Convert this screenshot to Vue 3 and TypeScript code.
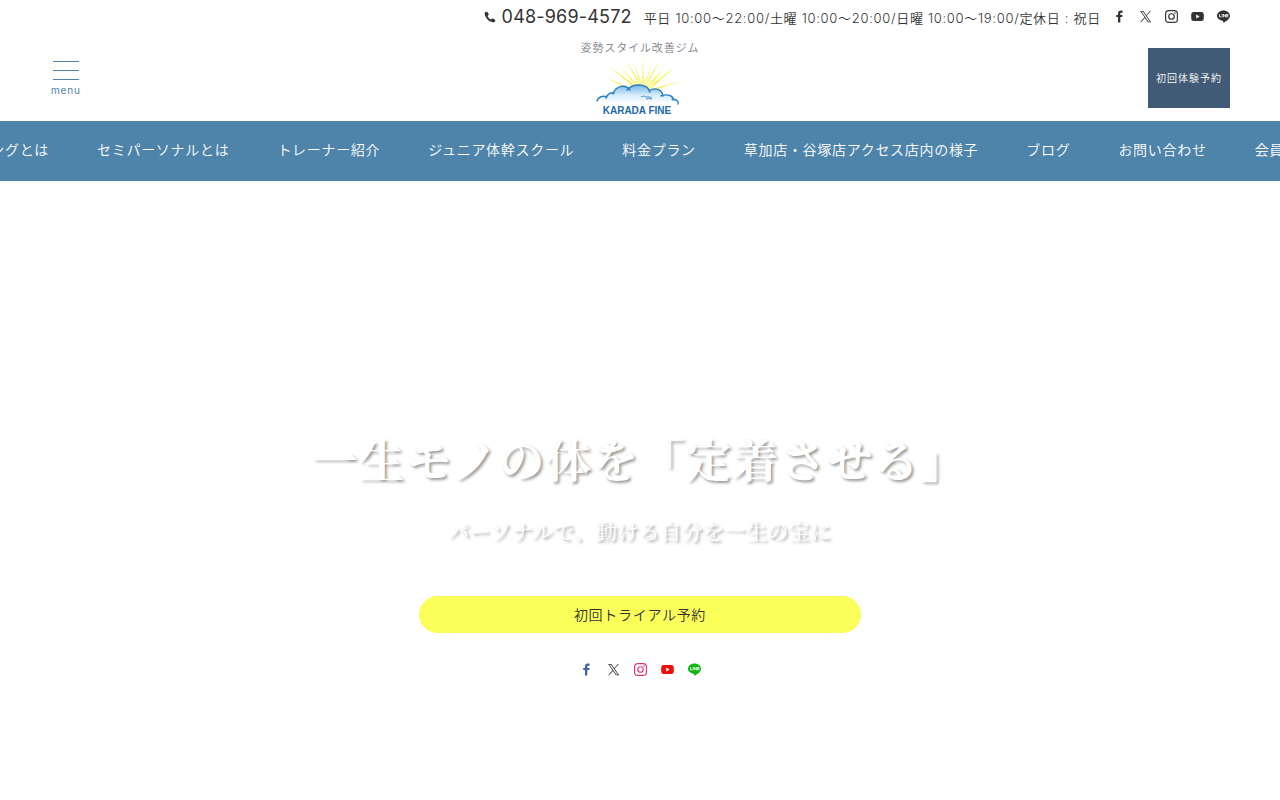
<script setup lang="ts">
interface Social {
  name: string
  path: string
}

const phone = '048-969-4572'
const hours = '平日 10:00〜22:00/土曜 10:00〜20:00/日曜 10:00〜19:00/定休日 : 祝日'

const navItems: string[] = [
  'パーソナルトレーニングとは',
  'セミパーソナルとは',
  'トレーナー紹介',
  'ジュニア体幹スクール',
  '料金プラン',
  '草加店・谷塚店アクセス店内の様子',
  'ブログ',
  'お問い合わせ',
  '会員様専用ご予約ページ',
]

const socials: Social[] = [
  {
    name: 'facebook',
    path: 'M9.2 23V13H6V9h3.2V6.6C9.200 3 11.100 1 14.600 1c1.400 0 2.700.1 3.100.2v3.700h-2.200c-1.600 0-2 .8-2 2V9h4.100l-.6 4h-3.500v10z',
  },
  {
    name: 'x',
    path: 'M14.2 10.600 21.800 2H20l-6.600 7.500L8.200 2H2.100l8 11.500L2.100 22.600h1.800l7-8 5.600 8h6.100zM11.700 13.400l-.8-1.200L4.600 3.300h2.700l5.200 7.400.8 1.200 6.800 9.500h-2.800z',
  },
  {
    name: 'instagram',
    path: 'M7 0h10a7 7 0 0 1 7 7v10a7 7 0 0 1-7 7H7a7 7 0 0 1-7-7V7a7 7 0 0 1 7-7zm0 2.200A4.800 4.800 0 0 0 2.200 7v10A4.800 4.800 0 0 0 7 21.800h10a4.800 4.800 0 0 0 4.800-4.800V7A4.800 4.800 0 0 0 17 2.200zM12 5.800a6.200 6.200 0 1 1 0 12.400 6.200 6.200 0 0 1 0-12.400zm0 2.200a4 4 0 1 0 0 8 4 4 0 0 0 0-8zm6.400-3.800a1.400 1.400 0 1 1 0 2.900 1.400 1.400 0 0 1 0-2.900z',
  },
  {
    name: 'youtube',
    path: 'M4.500 3.800Q12 3.200 19.500 3.800 23 4 23.500 7.500q.5 4.500 0 9-.5 3.500-4 3.700-7.500.6-15 0Q1 20 .5 16.500q-.5-4.500 0-9Q1 4 4.500 3.800zM9.600 8.300v7.400L16 12z',
  },
  {
    name: 'line',
    path: 'M12 .8c6.600 0 12 4.300 12 9.700 0 2.100-.8 4-2.500 5.900-2.500 2.900-8 6.300-9.300 6.900-1.300.5-1.100-.3-1-.7l.2-1c0-.3.100-.8 0-1.200-.2-.4-.8-.6-1.300-.7C4.300 18.900 0 15.100 0 10.500 0 5.100 5.400.8 12 .8zM4 7.500v6h4v-1.300H5.400V7.500zm4.800 0v6h1.400v-6zm2.400 0v6h1.300V9.900l2.500 3.600h1.200v-6h-1.300v3.600l-2.500-3.600zm5.900 0v6h4v-1.300h-2.600v-1.100h2.600V9.800h-2.600V8.800h2.600V7.500z',
  },
]
</script>

<template>
  <div class="page">
    <header>
      <div class="topbar">
        <a class="phone" href="tel:048-969-4572">
          <svg class="phone-icon" viewBox="0 0 12 12" aria-hidden="true">
            <path d="M2.300.7C1.100 1 .4 2.100.7 3.300c.9 4 4 7.200 8 8 1.200.2 2.200-.5 2.600-1.600.1-.4 0-.7-.3-.9L8.900 7.500c-.3-.2-.7-.1-.9.1l-.9 1C5.500 7.800 4.300 6.500 3.500 4.900l1-.9c.3-.2.3-.6.2-.9L3.300 1C3.100.7 2.700.600 2.300.7z" />
          </svg>
          <span>{{ phone }}</span>
        </a>
        <span class="hours">{{ hours }}</span>
        <ul class="socials top-socials">
          <li v-for="s in socials" :key="s.name">
            <a href="#" :aria-label="s.name" :class="s.name">
              <svg viewBox="0 0 24 24" aria-hidden="true"><path :d="s.path" fill-rule="evenodd" /></svg>
            </a>
          </li>
        </ul>
      </div>

      <div class="brandbar">
        <button class="menu" type="button">
          <span class="bars" aria-hidden="true"><i></i><i></i><i></i></span>
          <span class="menu-label">menu</span>
        </button>
        <div class="brand">
          <p class="tagline">姿勢スタイル改善ジム</p>
          <a href="#" class="logo">
            <svg viewBox="0 0 84 60" role="img" aria-label="KARADA FINE">
              <defs>
                <linearGradient id="cloud" x1="0" y1="0" x2="0" y2="1">
                  <stop offset="0" stop-color="#6fb4e8" />
                  <stop offset="0.55" stop-color="#d9edfb" />
                  <stop offset="1" stop-color="#ffffff" />
                </linearGradient>
              </defs>
              <g fill="#f7f36e">
                <path d="M47 1 48 28H46z" />
                <path d="M29 3 45 28 43 29z" />
                <path d="M38 7 46 28 44 28z" />
                <path d="M64 4 52 28 50 27z" />
                <path d="M56 7 50 28 49 27z" />
                <path d="M13 10 40 30 38 32z" />
                <path d="M24 11 42 29 40 30z" />
                <path d="M80 10 57 31 55 29z" />
                <path d="M68 13 54 30 52 28z" />
                <path d="M9 21 34 32 33 34z" />
                <path d="M84 25 60 34 59 32z" />
              </g>
              <path d="M36 33a11 11 0 0 1 22 1z" fill="#fdf9a6" />
              <path
                d="M1 45C2 41 7 39 11 41 12 38 15 36 18 37 20 29 30 28 33 33 37 27 51 27 54 35 59 31 66 33 67 39 73 37 78 41 77 43 81 43 83 46 82 48 78 45 73 45 71 48 66 44 61 45 59 48 53 44 47 45 44 48 38 44 32 45 28 48 24 44 18 44 14 48 10 43 5 43 1 45z"
                fill="url(#cloud)"
              />
              <path
                d="M1 45C2 41 7 39 11 41M10 42C11 38 15 36 18 37M17 38C20 29 30 28 34 34M31 34C37 27 51 27 54 36M53 35C59 31 66 33 67 40M65 40C73 37 78 41 77 44M76 43C81 43 83 46 82 48"
                fill="none"
                stroke="#2b7fc4"
                stroke-width="1.400"
                stroke-linecap="round"
              />
              <path d="M45 41q3-2 5 0 3-1 6 1M50 43q3-1 6 0" fill="none" stroke="#4a9ad6" stroke-width="1" />
              <text x="41" y="58" text-anchor="middle">KARADA FINE</text>
            </svg>
          </a>
        </div>
        <a href="#" class="trial">初回体験予約</a>
      </div>

      <nav class="nav">
        <ul>
          <li v-for="item in navItems" :key="item"><a href="#">{{ item }}</a></li>
        </ul>
      </nav>
    </header>

    <main class="hero">
      <h1>一生モノの体を「定着させる」</h1>
      <p class="lead">パーソナルで、動ける自分を一生の宝に</p>
      <a href="#" class="cta">初回トライアル予約</a>
      <ul class="socials hero-socials">
        <li v-for="s in socials" :key="s.name">
          <a href="#" :aria-label="s.name" :class="s.name">
            <svg viewBox="0 0 24 24" aria-hidden="true"><path :d="s.path" fill-rule="evenodd" /></svg>
          </a>
        </li>
      </ul>
    </main>
  </div>
</template>

<style>
body {
  margin: 0;
  background: #ffffff;
}
</style>

<style scoped>
.page {
  min-height: 100vh;
  display: flex;
  flex-direction: column;
  overflow: hidden;
  font-family: Inter, 'Noto Sans CJK JP', sans-serif;
  font-size: 14px;
  font-weight: 350;
  letter-spacing: 0.05em;
  color: #333333;
}
a {
  color: inherit;
  text-decoration: none;
}
ul {
  list-style: none;
  margin: 0;
  padding: 0;
}
h1,
p {
  margin: 0;
}
.topbar {
  display: flex;
  justify-content: flex-end;
  align-items: center;
  height: 34px;
  padding: 0 50px;
  white-space: nowrap;
}
.phone {
  display: flex;
  align-items: center;
  gap: 6px;
  font-size: 18px;
  font-weight: 400;
  line-height: 34px;
  letter-spacing: 0.01em;
}
.phone-icon {
  width: 12px;
  height: 12px;
  fill: #333333;
}
.hours {
  margin: 1px 12px 0;
  font-size: 13px;
  line-height: 18px;
}
.socials {
  display: flex;
}
.socials a,
.socials svg {
  display: block;
}
.socials svg {
  width: 13px;
  height: 13px;
  fill: currentColor;
}
.top-socials {
  gap: 13px;
  margin-bottom: 2px;
}
.brandbar {
  display: grid;
  grid-template-columns: 1fr auto 1fr;
  align-items: center;
  height: 87px;
  padding: 0 50px;
}
.menu {
  justify-self: start;
  display: flex;
  flex-direction: column;
  align-items: center;
  gap: 3px;
  padding: 2px 1px 0;
  border: 0;
  background: none;
  font-family: inherit;
  color: #4f84aa;
  cursor: pointer;
}
.bars {
  display: flex;
  flex-direction: column;
  gap: 8px;
  width: 26px;
}
.bars i {
  height: 1px;
  background: #4f84aa;
}
.menu-label {
  font-size: 10px;
  line-height: 14px;
  letter-spacing: 0.08em;
}
.brand {
  display: flex;
  flex-direction: column;
  align-items: center;
}
.tagline {
  font-size: 11px;
  line-height: 16px;
  letter-spacing: 0.08em;
  color: #7c8088;
}
.logo,
.logo svg {
  display: block;
}
.logo {
  padding-right: 4px;
}
.logo svg {
  width: 84px;
  height: 60px;
  overflow: visible;
}
.logo text {
  font-family: 'Liberation Sans', sans-serif;
  font-size: 10px;
  font-weight: 700;
  letter-spacing: 0;
  fill: #2268a8;
}
.trial {
  justify-self: end;
  padding: 0 8px;
  background: #415a75;
  color: #ffffff;
  font-size: 10px;
  line-height: 60px;
  letter-spacing: 0.1em;
}
.nav {
  background: #4f84aa;
  color: #ffffff;
  overflow: hidden;
}
.nav ul {
  display: flex;
  justify-content: center;
  gap: 48px;
  padding: 0 6px 2px 0;
}
.nav li {
  flex: none;
  white-space: nowrap;
  line-height: 58px;
}
.hero {
  flex: 1;
  display: flex;
  flex-direction: column;
  align-items: center;
  padding: 246px 20px 0;
}
h1 {
  font-family: 'Noto Serif CJK JP', 'Noto Sans CJK JP', serif;
  font-size: 45px;
  font-weight: 700;
  line-height: 64px;
  letter-spacing: 0.04em;
  color: #ffffff;
  text-shadow: 2px 2px 3px rgba(0, 0, 0, 0.4);
}
.lead {
  margin-top: 22px;
  font-family: 'Noto Serif CJK JP', 'Noto Sans CJK JP', serif;
  font-size: 21px;
  font-weight: 400;
  line-height: 34px;
  letter-spacing: 0.02em;
  color: #ffffff;
  text-shadow: 2px 2px 3px rgba(0, 0, 0, 0.4);
}
.cta {
  box-sizing: border-box;
  width: 100%;
  max-width: 442px;
  margin-top: 49px;
  border-radius: 20px;
  background: #faff5a;
  text-align: center;
  line-height: 37px;
}
.hero-socials {
  margin-top: 30px;
  gap: 14px;
}
.hero-socials .facebook {
  color: #3b64a0;
}
.hero-socials .instagram {
  color: #d93a7c;
}
.hero-socials .youtube {
  color: #f20d0d;
}
.hero-socials .line {
  color: #0fb60f;
}
</style>
